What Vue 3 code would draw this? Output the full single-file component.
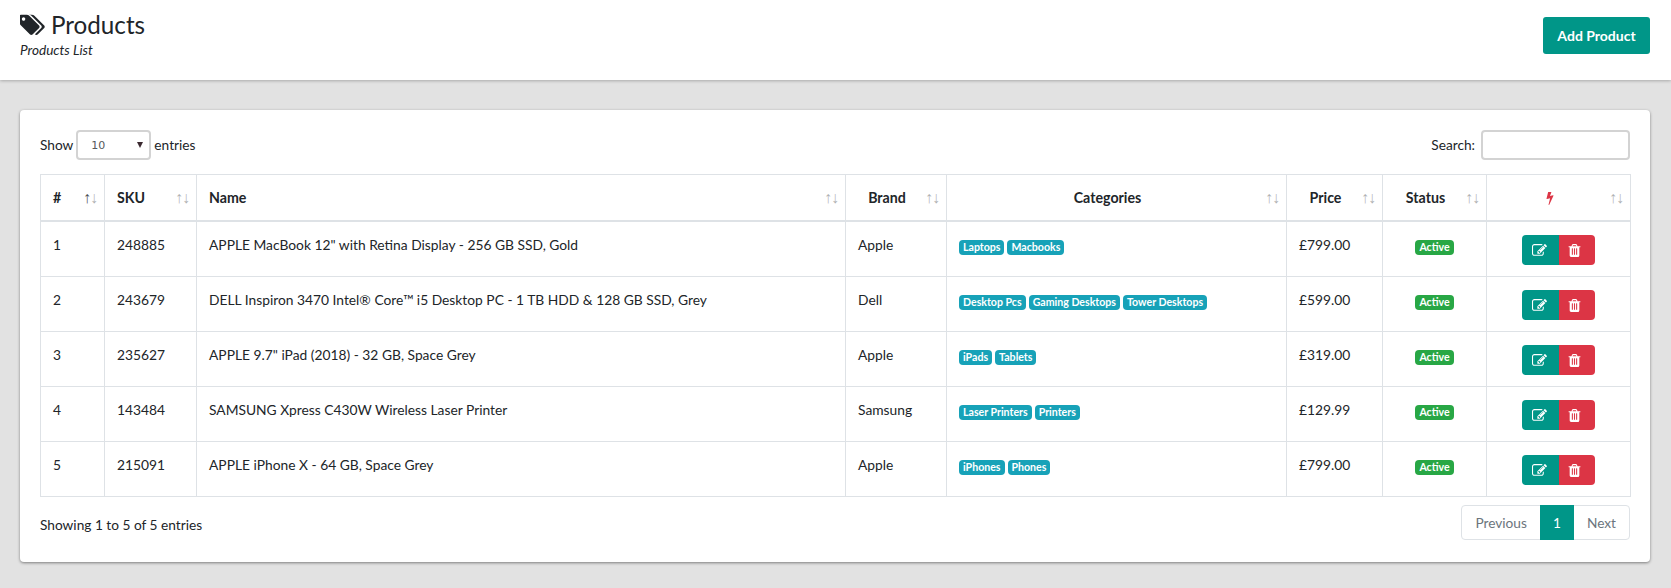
<script setup>
const columns = [
  { label: '#', width: 64, sorted: true },
  { label: 'SKU', width: 92 },
  { label: 'Name', width: 649 },
  { label: 'Brand', width: 101, center: true },
  { label: 'Categories', width: 340, center: true },
  { label: 'Price', width: 96, center: true },
  { label: 'Status', width: 104, center: true },
  { label: '', width: 144, center: true, bolt: true }
]

const products = [
  { id: 1, sku: '248885', name: 'APPLE MacBook 12" with Retina Display - 256 GB SSD, Gold', brand: 'Apple', categories: ['Laptops', 'Macbooks'], price: '£799.00' },
  { id: 2, sku: '243679', name: 'DELL Inspiron 3470 Intel® Core™ i5 Desktop PC - 1 TB HDD & 128 GB SSD, Grey', brand: 'Dell', categories: ['Desktop Pcs', 'Gaming Desktops', 'Tower Desktops'], price: '£599.00' },
  { id: 3, sku: '235627', name: 'APPLE 9.7" iPad (2018) - 32 GB, Space Grey', brand: 'Apple', categories: ['iPads', 'Tablets'], price: '£319.00' },
  { id: 4, sku: '143484', name: 'SAMSUNG Xpress C430W Wireless Laser Printer', brand: 'Samsung', categories: ['Laser Printers', 'Printers'], price: '£129.99' },
  { id: 5, sku: '215091', name: 'APPLE iPhone X - 64 GB, Space Grey', brand: 'Apple', categories: ['iPhones', 'Phones'], price: '£799.00' }
]
</script>

<template>
  <div class="page">
    <!-- header -->
    <header class="topbar">
      <div>
        <h1 class="title">
          <svg class="tags-icon" viewBox="0 0 1920 1792"><path fill="currentColor" d="M384 448q0-53-37.5-90.5t-90.5-37.5-90.5 37.5-37.5 90.5 37.5 90.5 90.5 37.5 90.5-37.5 37.5-90.5zm1067 576q0 53-37 90l-491 492q-39 37-91 37-53 0-90-37l-715-716q-38-37-64.5-101t-26.5-117v-416q0-52 38-90t90-38h416q53 0 117 26.5t102 64.5l715 714q37 39 37 91zm384 0q0 53-37 90l-491 492q-39 37-91 37-36 0-59-14t-53-45l470-470q37-37 37-90 0-52-37-91l-715-714q-38-38-102-64.5t-117-26.5h224q53 0 117 26.5t102 64.5l715 714q37 39 37 91z"/></svg>
          Products
        </h1>
        <div class="subtitle">Products List</div>
      </div>
      <button class="add-btn">Add Product</button>
    </header>

    <!-- card -->
    <section class="card">
      <div class="controls">
        <label class="length">
          Show
          <span class="select-wrap">
            <select class="select"><option>10</option><option>25</option></select>
          </span>
          entries
        </label>
        <label class="search">
          Search:
          <input class="search-input" type="text" />
        </label>
      </div>

      <table class="table">
        <colgroup>
          <col v-for="col in columns" :key="col.label" :style="{ width: col.width + 'px' }" />
        </colgroup>
        <thead>
          <tr>
            <th v-for="col in columns" :key="col.label" :class="{ center: col.center, sorted: col.sorted }">
              <svg v-if="col.bolt" class="bolt" viewBox="0 0 1792 1792"><path fill="currentColor" d="M1333 566q18 20 7 44l-540 1157q-13 25-42 25-4 0-14-2-17-5-25.5-19t-4.5-30l197-808-406 101q-4 1-12 1-18 0-31-11-18-15-13-39l201-825q4-14 16-23t28-9h328q19 0 32 12.5t13 29.5q0 8-5 18l-171 463 396-98q8-2 12-2 19 0 34 15z"/></svg>
              {{ col.label }}
            </th>
          </tr>
        </thead>
        <tbody>
          <tr v-for="p in products" :key="p.id">
            <td>{{ p.id }}</td>
            <td>{{ p.sku }}</td>
            <td>{{ p.name }}</td>
            <td>{{ p.brand }}</td>
            <td>
              <div class="badges">
                <span v-for="c in p.categories" :key="c" class="badge info">{{ c }}</span>
              </div>
            </td>
            <td>{{ p.price }}</td>
            <td class="center"><div class="badges center-row"><span class="badge success">Active</span></div></td>
            <td class="center">
              <div class="actions">
                <button class="act edit">
                  <svg viewBox="0 0 1792 1792"><path fill="currentColor" d="M888 1184l116-116-152-152-116 116v56h96v96h56zm440-720q-16-16-33 1l-350 350q-17 17-1 33t33-1l350-350q17-17 1-33zm80 594v190q0 119-84.5 203.5t-203.5 84.5h-832q-119 0-203.5-84.5t-84.5-203.5v-832q0-119 84.5-203.5t203.5-84.5h832q63 0 117 25 15 7 18 23 3 17-9 29l-49 49q-14 14-32 8-23-6-45-6h-832q-66 0-113 47t-47 113v832q0 66 47 113t113 47h832q66 0 113-47t47-113v-126q0-13 9-22l64-64q15-15 35-7t20 29zm-96-738l288 288-672 672h-288v-288zm444 132l-92 92-288-288 92-92q28-28 68-28t68 28l152 152q28 28 28 68t-28 68z"/></svg>
                </button>
                <button class="act del">
                  <svg viewBox="0 0 1792 1792"><path fill="currentColor" d="M704 1376v-704q0-14-9-23t-23-9h-64q-14 0-23 9t-9 23v704q0 14 9 23t23 9h64q14 0 23-9t9-23zm256 0v-704q0-14-9-23t-23-9h-64q-14 0-23 9t-9 23v704q0 14 9 23t23 9h64q14 0 23-9t9-23zm256 0v-704q0-14-9-23t-23-9h-64q-14 0-23 9t-9 23v704q0 14 9 23t23 9h64q14 0 23-9t9-23zm-544-992h448l-48-117q-7-9-17-11h-317q-10 2-17 11zm928 32v64q0 14-9 23t-23 9h-96v948q0 83-47 143.5t-113 60.5h-832q-66 0-113-58.5t-47-141.5v-952h-96q-14 0-23-9t-9-23v-64q0-14 9-23t23-9h309l70-167q15-37 54-63t79-26h320q40 0 79 26t54 63l70 167h309q14 0 23 9t9 23z"/></svg>
                </button>
              </div>
            </td>
          </tr>
        </tbody>
      </table>

      <div class="footer">
        <div class="info-text">Showing 1 to 5 of 5 entries</div>
        <div class="pagination">
          <a class="page-link">Previous</a>
          <a class="page-link active">1</a>
          <a class="page-link">Next</a>
        </div>
      </div>
    </section>
  </div>
</template>

<style>
html, body {
  margin: 0;
  background: #e2e2e2;
}
</style>

<style scoped>
.page {
  min-height: 588px;
  background: #e2e2e2;
  font-family: Lato, 'Open Sans', sans-serif;
  font-size: 13.7px;
  line-height: 1.5;
  color: #212529;
}

.topbar {
  height: 80px;
  box-sizing: border-box;
  padding: 10px 21px 0 20px;
  background: #fff;
  box-shadow: 0 1px 3px rgba(0, 0, 0, 0.25);
  display: flex;
  justify-content: space-between;
  align-items: flex-start;
}

.title {
  margin: 0;
  font-size: 24.2px;
  font-weight: 400;
  line-height: 29px;
  display: flex;
  align-items: center;
  gap: 5px;
}

.tags-icon {
  width: 26px;
  height: 24px;
}

.subtitle {
  margin-top: 1px;
  font-size: 13.6px;
  font-style: italic;
  line-height: 20px;
}

.add-btn {
  margin-top: 7px;
  width: 107px;
  height: 37px;
  border: 0;
  border-radius: 3px;
  background: #009688;
  color: #fff;
  font-family: inherit;
  font-size: 14px;
  font-weight: 700;
}

.card {
  margin: 30px 21px 0 20px;
  padding: 20px;
  height: 452px;
  box-sizing: border-box;
  background: #fff;
  border-radius: 4px;
  box-shadow: 0 1px 3px rgba(0, 0, 0, 0.45);
}

.controls {
  display: flex;
  justify-content: space-between;
  align-items: center;
  height: 30px;
  margin-bottom: 14px;
}

.length,
.search {
  display: flex;
  align-items: center;
  gap: 3px;
}

.search {
  gap: 6px;
}

.select-wrap {
  position: relative;
  display: block;
}

.select-wrap::after {
  content: '';
  position: absolute;
  top: 12px;
  right: 8px;
  border-left: 3px solid transparent;
  border-right: 3px solid transparent;
  border-top: 6px solid #3b2a30;
}

.select {
  display: block;
  appearance: none;
  width: 75px;
  height: 30px;
  padding: 0 0 0 13px;
  border: 2px solid #d3d3d3;
  border-radius: 4px;
  background: #fff;
  color: #55595c;
  font-family: 'DejaVu Sans', sans-serif;
  font-size: 11px;
}

.search-input {
  display: block;
  width: 149px;
  height: 30px;
  box-sizing: border-box;
  border: 2px solid #d3d3d3;
  border-radius: 4px;
  background: #fff;
}

.table {
  width: 1590px;
  table-layout: fixed;
  border-collapse: collapse;
  box-sizing: border-box;
}

.table th,
.table td {
  border: 1px solid #dee2e6;
  padding: 12px;
  vertical-align: top;
  text-align: left;
  font-weight: 400;
}

.table td {
  padding-top: 13px;
  padding-bottom: 11px;
  font-size: 13.8px;
  line-height: 19px;
}

.table th {
  position: relative;
  height: 21px;
  padding-right: 30px;
  font-size: 14.2px;
  font-weight: 700;
  border-bottom-width: 2px;
}

.table th.center {
  text-align: center;
}

.table td.center {
  text-align: center;
}

.table th::before,
.table th::after {
  position: absolute;
  top: 11px;
  opacity: 0.35;
  font-family: 'Liberation Sans', sans-serif;
  font-size: 16px;
  font-weight: 400;
}

.table th::before {
  content: '↑';
  right: 13px;
}

.table th::after {
  content: '↓';
  right: 6px;
}

.table th.sorted::before {
  opacity: 0.8;
}

.bolt {
  width: 14px;
  height: 14px;
  color: #dc3545;
  vertical-align: -2px;
}

.badges {
  display: flex;
  flex-wrap: wrap;
  gap: 3px;
  padding-top: 5px;
}

.center-row {
  justify-content: center;
}

.badge {
  height: 15px;
  padding: 0 4px;
  border-radius: 4px;
  color: #fff;
  font-size: 10.6px;
  font-weight: 700;
  line-height: 15px;
}

.badge.info {
  background: #17a2b8;
}

.badge.success {
  background: #28a745;
}

.actions {
  display: inline-flex;
  vertical-align: top;
  border-radius: 4px;
  overflow: hidden;
}

.act {
  height: 30px;
  border: 0;
  display: flex;
  align-items: center;
  color: #fff;
}

.act svg {
  width: 15px;
  height: 15px;
}

.act.edit {
  width: 37px;
  padding: 0 0 0 10px;
  background: #009688;
}

.act.del {
  width: 36px;
  padding: 0 0 0 8px;
  background: #dc3545;
}

.footer {
  display: flex;
  justify-content: space-between;
  align-items: flex-start;
  margin-top: 8px;
}

.info-text {
  padding-top: 10px;
}

.pagination {
  display: flex;
  height: 35px;
  box-sizing: border-box;
  border: 1px solid #dee2e6;
  border-radius: 4px;
}

.page-link {
  padding: 0 13px;
  line-height: 33px;
  color: #6c757d;
}

.page-link.active {
  margin: -1px 0;
  line-height: 35px;
  background: #009688;
  color: #fff;
}
</style>
